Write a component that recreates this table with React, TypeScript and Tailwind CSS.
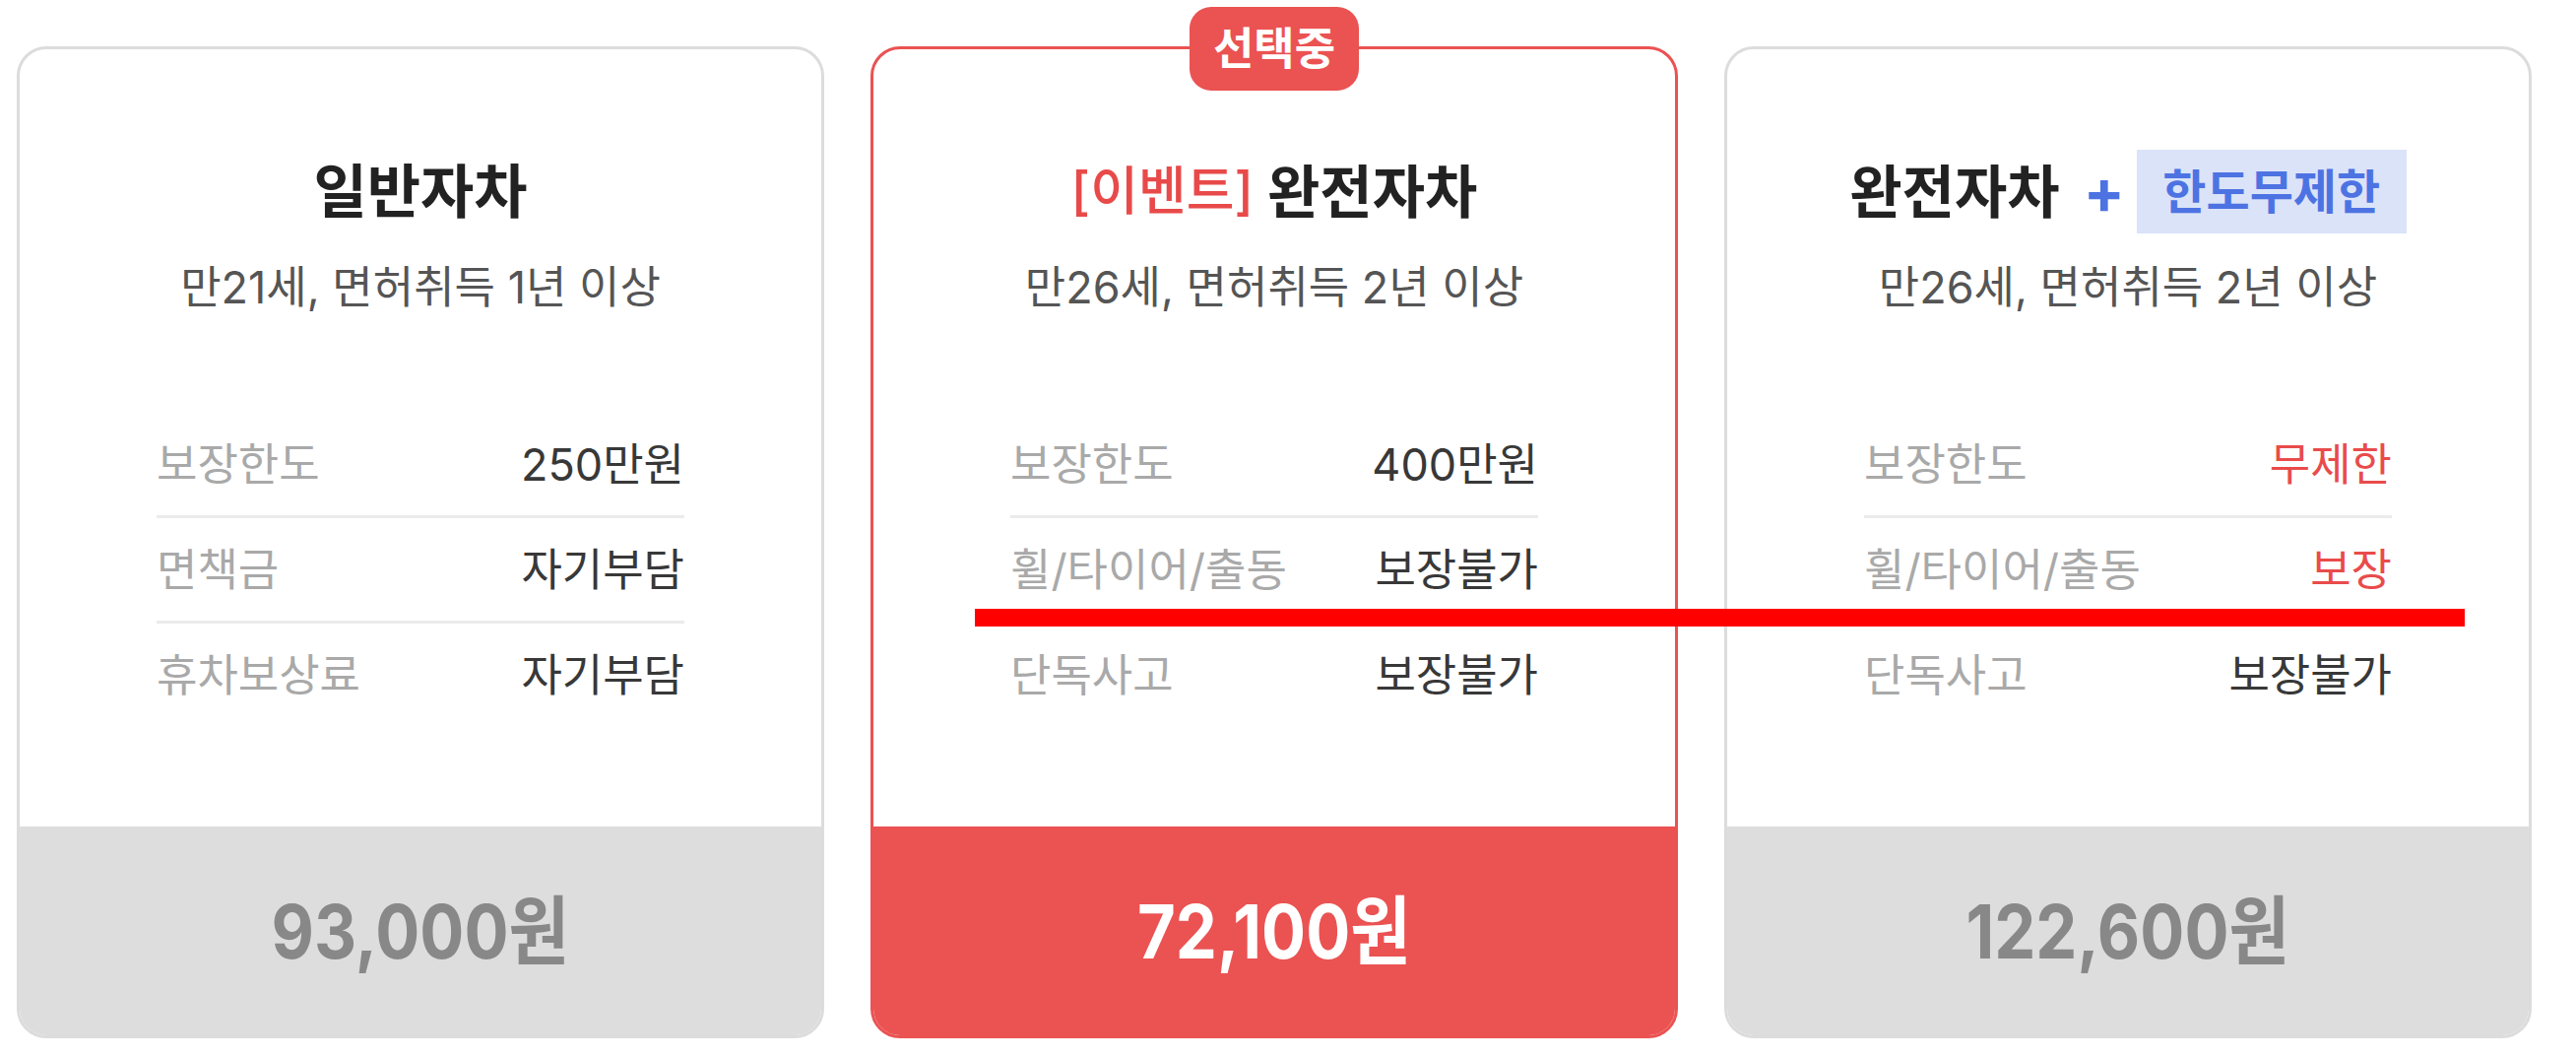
import React from "react";

type Row = { label: string; value: string; red?: boolean };

function InfoRow({ row, last }: { row: Row; last: boolean }) {
  return (
    <div
      className={
        last
          ? "flex h-[104px] items-center justify-between"
          : "flex h-[107px] items-center justify-between border-b-[3px] border-[#ebebeb]"
      }
    >
      <span className="text-[45px] leading-none text-[#a9a9a9]">{row.label}</span>
      <span
        className={
          row.red
            ? "text-[45px] leading-none text-[#e94b4b]"
            : "text-[45px] leading-none text-[#383838]"
        }
      >
        {row.value}
      </span>
    </div>
  );
}

function Card({
  selected,
  title,
  subtitle,
  rows,
  price,
}: {
  selected?: boolean;
  title: React.ReactNode;
  subtitle: string;
  rows: Row[];
  price: string;
}) {
  return (
    <div
      className={
        selected
          ? "relative flex h-[1007px] w-[820px] shrink-0 flex-col rounded-[30px] border-[3px] border-[#eb5252] bg-white"
          : "relative flex h-[1007px] w-[820px] shrink-0 flex-col rounded-[30px] border-[3px] border-[#dcdcdc] bg-white"
      }
    >
      {selected && (
        <div className="absolute left-1/2 top-[-43px] flex h-[85px] w-[172px] -translate-x-1/2 items-center justify-center rounded-[22px] bg-[#eb5252]">
          <span className="text-[45px] font-bold leading-none text-white">선택중</span>
        </div>
      )}
      <div className="mt-[102px] flex h-[85px] items-center justify-center">{title}</div>
      <div className="mt-[29px] flex h-[50px] items-center justify-center text-[45px] leading-none text-[#555555]">
        {subtitle}
      </div>
      <div className="mt-[103px] flex flex-col px-[139px]">
        {rows.map((r, i) => (
          <InfoRow key={r.label} row={r} last={i === rows.length - 1} />
        ))}
      </div>
      <div
        className={
          selected
            ? "mt-auto flex h-[212px] items-center justify-center rounded-b-[27px] bg-[#eb5252]"
            : "mt-auto flex h-[212px] items-center justify-center rounded-b-[27px] bg-[#dddddd]"
        }
      >
        <span
          className={
            selected
              ? "scale-x-[0.88] text-[76px] font-bold leading-none text-white"
              : "scale-x-[0.88] text-[76px] font-bold leading-none text-[#888888]"
          }
        >
          {price}
        </span>
      </div>
    </div>
  );
}

export default function App() {
  return (
    <div className="relative h-[1073px] w-[2616px] overflow-hidden bg-white font-['Inter','Noto_Sans_CJK_KR',sans-serif]">
      <div className="flex gap-[47px] pl-[17px] pt-[47px]">
        <Card
          title={<span className="text-[59px] font-bold leading-none text-[#222222]">일반자차</span>}
          subtitle="만21세, 면허취득 1년 이상"
          rows={[
            { label: "보장한도", value: "250만원" },
            { label: "면책금", value: "자기부담" },
            { label: "휴차보상료", value: "자기부담" },
          ]}
          price="93,000원"
        />
        <Card
          selected
          title={
            <div className="flex items-center">
              <span className="text-[53px] font-medium leading-none text-[#e84a4a]">[이벤트]</span>
              <span className="ml-[14px] text-[58px] font-bold leading-none text-[#222222]">완전자차</span>
            </div>
          }
          subtitle="만26세, 면허취득 2년 이상"
          rows={[
            { label: "보장한도", value: "400만원" },
            { label: "휠/타이어/출동", value: "보장불가" },
            { label: "단독사고", value: "보장불가" },
          ]}
          price="72,100원"
        />
        <Card
          title={
            <div className="flex items-center">
              <span className="text-[58px] font-bold leading-none text-[#222222]">완전자차</span>
              <span className="ml-[24px] text-[62px] font-bold leading-none text-[#4d73e3]">+</span>
              <span className="ml-[12px] flex h-[85px] w-[274px] items-center justify-center bg-[#dbe3f8] text-[48px] font-semibold leading-none text-[#4d73e3]">
                한도무제한
              </span>
            </div>
          }
          subtitle="만26세, 면허취득 2년 이상"
          rows={[
            { label: "보장한도", value: "무제한", red: true },
            { label: "휠/타이어/출동", value: "보장", red: true },
            { label: "단독사고", value: "보장불가" },
          ]}
          price="122,600원"
        />
      </div>
      <div className="absolute left-[990px] top-[618px] h-[18px] w-[1513px] bg-[#ff0000]" />
    </div>
  );
}
